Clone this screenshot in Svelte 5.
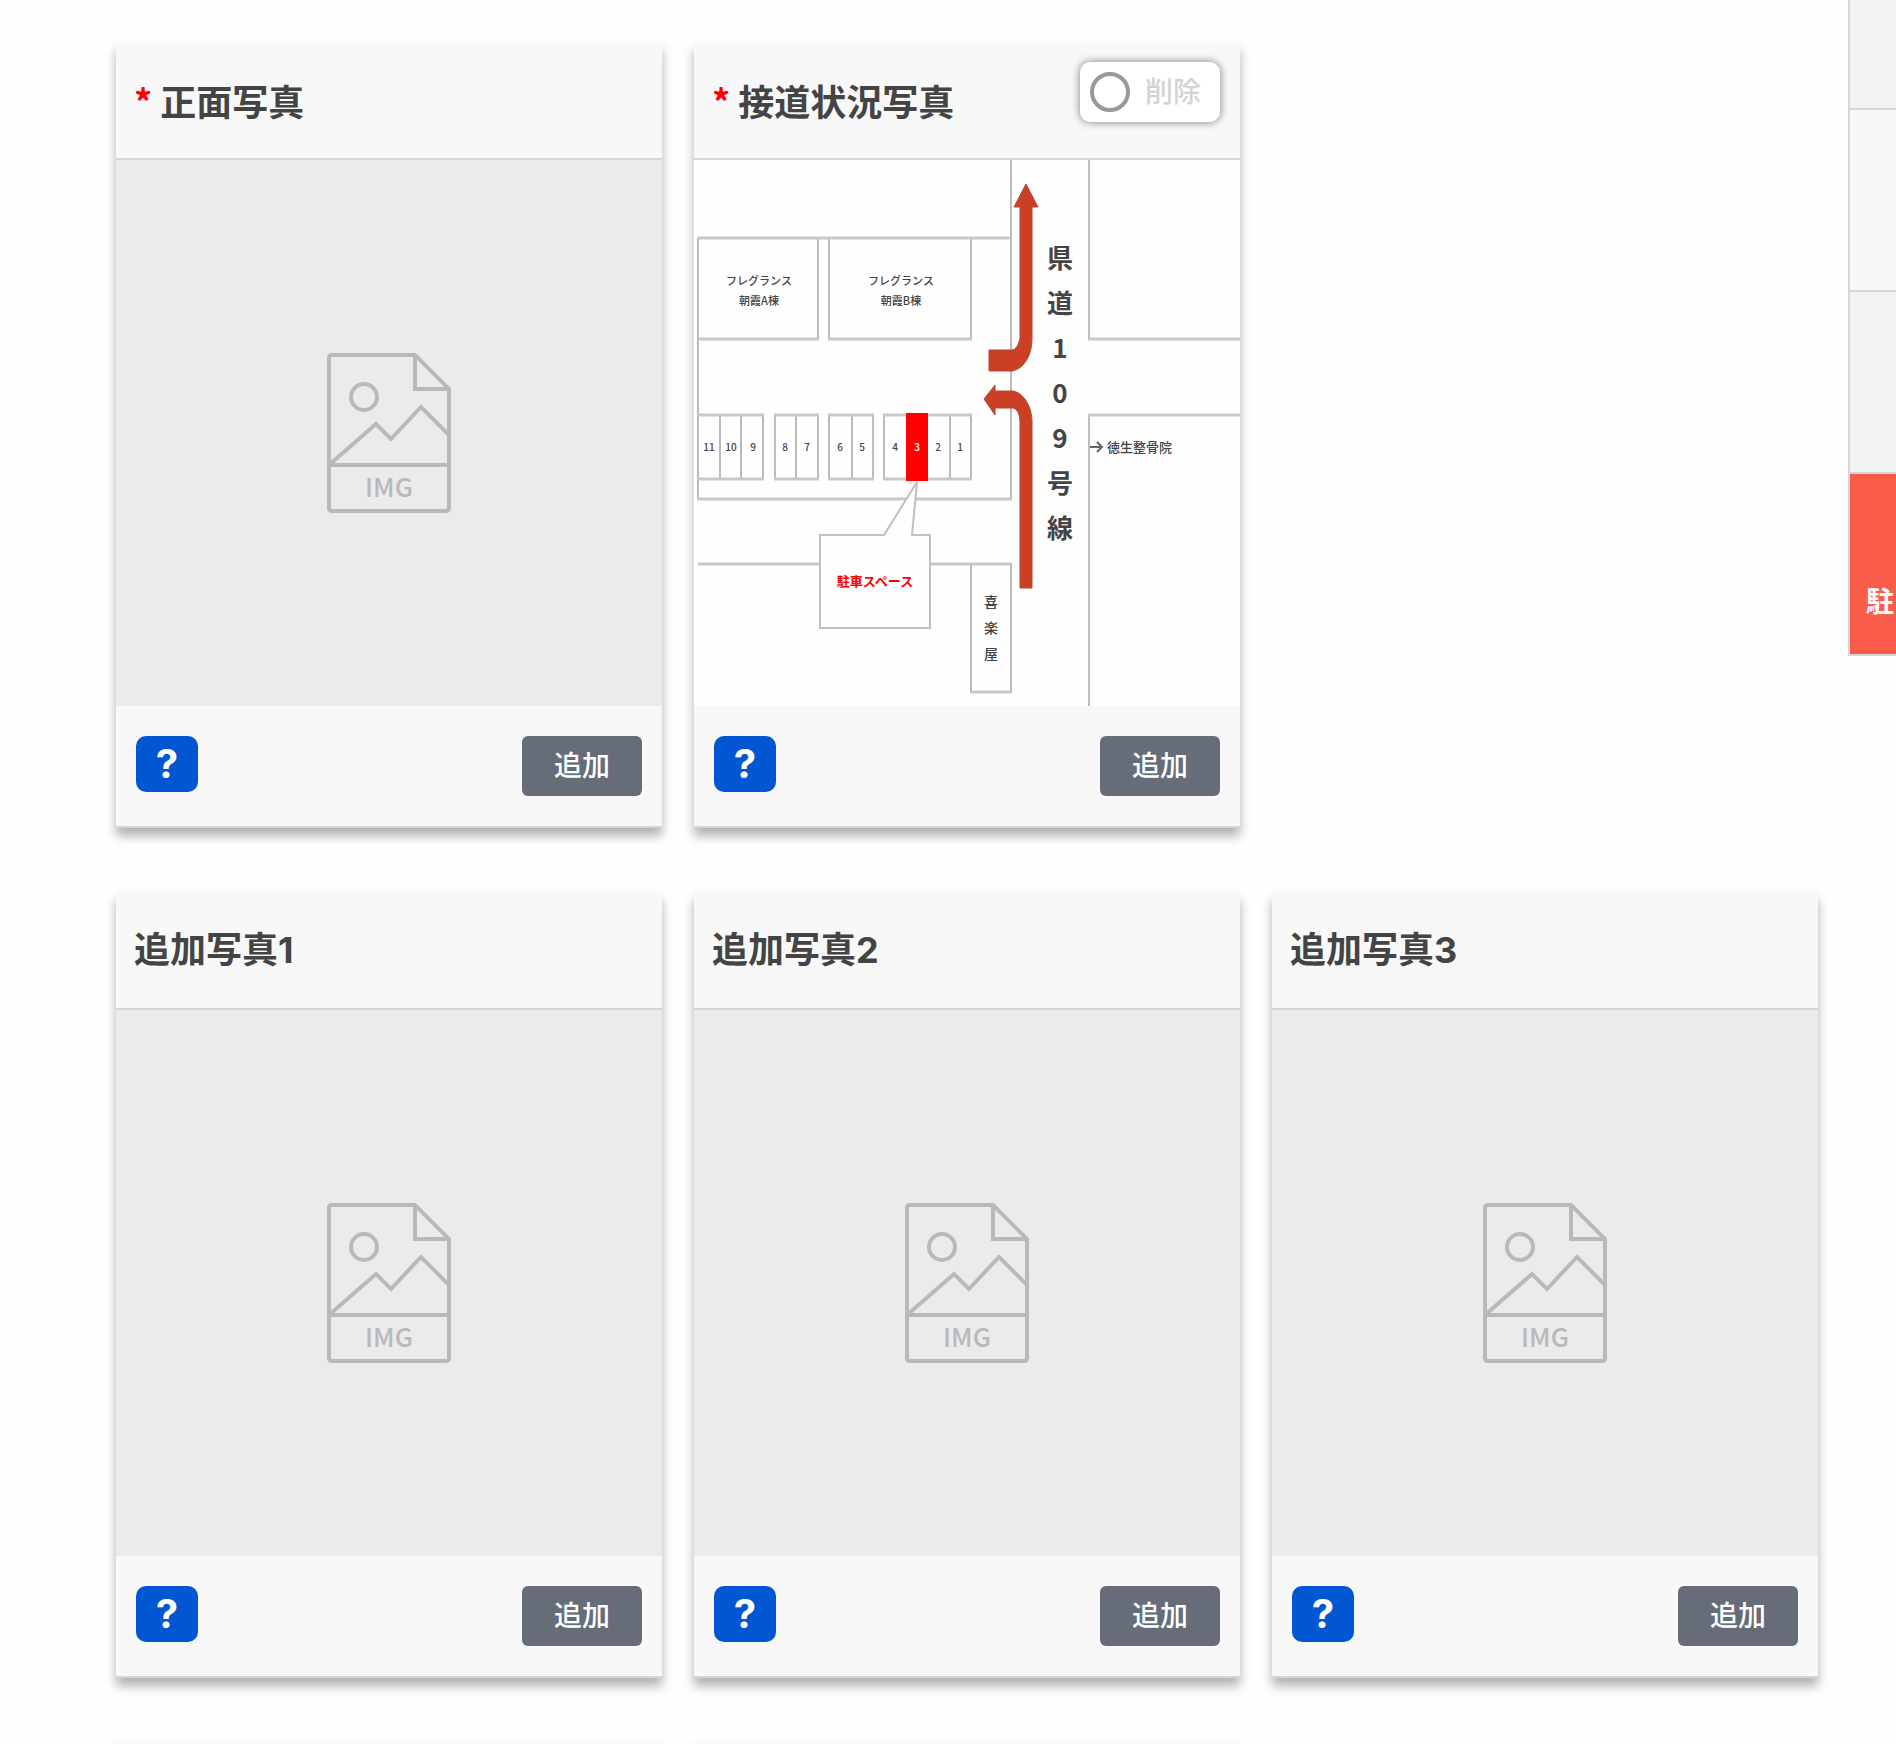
<script>
  let cards = $state([
    { title: "正面写真", required: true, map: false },
    { title: "接道状況写真", required: true, map: true, remove: false },
    { title: "追加写真1", newRow: true },
    { title: "追加写真2" },
    { title: "追加写真3" }
  ]);

  const steps = [
    { label: "", kind: "cut" },
    { label: "", kind: "light" },
    { label: "", kind: "plain" },
    { label: "駐", kind: "active" }
  ];

  // parking lot numbers and the x of their centre
  const lots = [
    [11, 15], [10, 37], [9, 59], [8, 91], [7, 113], [6, 146],
    [5, 168], [4, 201], [3, 223], [2, 244], [1, 266]
  ];
  const road = ["県", "道", "1", "0", "9", "号", "線"];
  const shop = ["喜", "楽", "屋"];
</script>

<div class="page">
  <main class="grid">
    {#each cards as card}
      <section class="card" class:new-row={card.newRow}>
        <header class="card-header">
          <h2>
            {#if card.required}<span class="required">*</span>{/if}{card.title}
          </h2>
          {#if card.map}
            <label class="remove">
              <input type="checkbox" bind:checked={card.remove} />
              <span>削除</span>
            </label>
          {/if}
        </header>

        <div class="photo">
          {#if card.map}
            <svg class="map" viewBox="0 0 546 546" role="img" aria-label={card.title}>
              <rect width="546" height="546" fill="#fefefe" />
              <g class="v">
                <path d="M317 0V339M4 78V339M124 78V179M135 78V179M277 78V179" />
                <path d="M395 0V179M395 255V546" />
                <path d="M26 255V319M47 255V319M69 255V319M81 255V319M102 255V319M124 255V319" />
                <path d="M135 255V319M158 255V319M179 255V319M190 255V319M256 255V319M277 255V319" />
                <path d="M277 404V532M317 404V532" />
              </g>
              <g class="h">
                <path d="M4 78H317M4 179H125M134 179H278M3 339H318" />
                <path d="M3 255H70M80 255H125M134 255H180M189 255H278" />
                <path d="M3 319H70M80 319H125M134 319H180M189 319H278" />
                <path d="M394 179H546M394 255H546M4 404H318M276 532H318" />
              </g>
              <rect x="212" y="253" width="22" height="68" fill="#f00" />
              <path class="callout" d="M126 375H190L223 322L218 375H236V468H126Z" />
              <path
                class="arrow"
                d="M295 190V211H318C330 209 338 195 338 179V47H344L332 24L320 47H326V178C325 184 322 190 318 190Z"
              />
              <path
                class="arrow"
                d="M290 239L301 225V231H319C330 233 338 247 338 262V428H326V262C326 254 323 249 319 248H301V255Z"
              />
              <text class="small" x="65" y="125">フレグランス</text>
              <text class="small" x="65" y="145">朝霞A棟</text>
              <text class="small" x="207" y="125">フレグランス</text>
              <text class="small" x="207" y="145">朝霞B棟</text>
              {#each lots as [no, x]}
                <text class="lot" class:taken={no === 3} {x} y="291">{no}</text>
              {/each}
              {#each road as char, i}
                <text class="road" x="366" y={108 + i * 45}>{char}</text>
              {/each}
              {#each shop as char, i}
                <text class="shop" x="297" y={447 + i * 26}>{char}</text>
              {/each}
              <path class="pointer" d="M396 287H407M403 282L408 287L403 292" />
              <text class="clinic" x="413" y="292">徳生整骨院</text>
              <text class="space" x="181" y="426">駐車スペース</text>
            </svg>
          {:else}
            <svg class="placeholder" viewBox="0 0 124 160" aria-hidden="true">
              <path d="M88 2H5Q2 2 2 5V155Q2 158 5 158H119Q122 158 122 155V36Z" />
              <path d="M88 2V36H122M2 112H122" />
              <path d="M2 112L49 71L64 86L94 54L122 82" />
              <circle cx="37" cy="44" r="13" />
              <text x="62" y="144">IMG</text>
            </svg>
          {/if}
        </div>

        <footer class="card-footer">
          <button class="help" type="button">?</button>
          <button class="add" type="button">追加</button>
        </footer>
      </section>
    {/each}
    <section class="card new-row"></section>
    <section class="card"></section>
  </main>

  <nav class="steps">
    {#each steps as step}
      <div class="step {step.kind}">
        {#if step.label}<a href="#parking">{step.label}</a>{/if}
      </div>
    {/each}
  </nav>
</div>

<style>
  :global(body) {
    background: #fefefe;
    font-family: Inter, "Noto Sans CJK JP", sans-serif;
    color: #444;
  }
  .page {
    display: flex;
    align-items: flex-start;
    height: 100vh;
    overflow: hidden;
  }
  .grid {
    flex: 1;
    display: grid;
    grid-template-columns: repeat(3, 1fr);
    gap: 64px 32px;
    padding: 42px 30px 0 116px;
  }
  .card {
    min-height: 120px;
    background: #f8f8f8;
    border-bottom: 2px solid #d5d5d5;
    box-shadow: 0 8px 10px rgba(0, 0, 0, 0.3);
  }
  .new-row {
    grid-column-start: 1;
  }
  .card-header {
    display: flex;
    justify-content: space-between;
    align-items: flex-start;
    box-sizing: border-box;
    height: 118px;
    padding: 20px 20px 0 18px;
    border-bottom: 2px solid #d5d5d5;
  }
  h2 {
    margin: 0;
    font-size: 36px;
    line-height: 76px;
    font-weight: 700;
  }
  .required {
    margin-right: 8px;
    color: #f00;
    font-family: "Noto Sans CJK JP", sans-serif;
  }
  .remove {
    display: flex;
    align-items: center;
    gap: 15px;
    box-sizing: border-box;
    width: 140px;
    height: 60px;
    padding-left: 10px;
    border-radius: 10px;
    background: #fff;
    box-shadow: 0 0 8px rgba(0, 0, 0, 0.5);
    color: #d3d3d3;
    font-size: 28px;
    line-height: 40px;
    font-weight: 500;
    cursor: pointer;
  }
  .remove input {
    appearance: none;
    box-sizing: border-box;
    width: 40px;
    height: 40px;
    margin: 0;
    border: 4px solid #999;
    border-radius: 50%;
  }
  .remove input:checked {
    background: #999;
  }
  .photo {
    display: flex;
    align-items: center;
    justify-content: center;
    aspect-ratio: 1;
    background: #ebebeb;
  }
  .placeholder {
    width: 124px;
    height: 160px;
    fill: none;
    stroke: #b9b9b9;
    stroke-width: 4;
  }
  .placeholder text {
    fill: #b9b9b9;
    stroke: none;
    font-family: "Noto Sans CJK JP", sans-serif;
    font-size: 26px;
    font-weight: 500;
    text-anchor: middle;
  }
  .map {
    width: 100%;
    height: 100%;
    font-family: "Noto Sans CJK JP", sans-serif;
    font-weight: 500;
    fill: #444;
  }
  .map text {
    text-anchor: middle;
  }
  .map .v {
    fill: none;
    stroke: #bbb;
    stroke-width: 2;
  }
  .map .h {
    fill: none;
    stroke: #c8c8c8;
    stroke-width: 3;
  }
  .map .callout {
    fill: #fefefe;
    stroke: #c0c0c0;
    stroke-width: 2;
  }
  .map .arrow {
    fill: #cb4024;
    stroke: #b04a36;
    stroke-width: 1;
  }
  .map .pointer {
    fill: none;
    stroke: #666;
    stroke-width: 2;
  }
  .map .small {
    font-size: 11px;
  }
  .map .lot {
    font-size: 10px;
  }
  .map .taken {
    fill: #fff;
  }
  .map .road {
    font-size: 26px;
    font-weight: 700;
  }
  .map .shop {
    font-size: 14px;
  }
  .map .clinic {
    font-size: 13px;
    text-anchor: start;
  }
  .map .space {
    fill: #f00;
    font-size: 13px;
    font-weight: 700;
  }
  .card-footer {
    display: flex;
    justify-content: space-between;
    align-items: flex-start;
    padding: 30px 20px;
  }
  button {
    padding: 0;
    border: 0;
    color: #fff;
    font-family: inherit;
    cursor: pointer;
  }
  .help {
    width: 62px;
    height: 56px;
    border-radius: 10px;
    background: #0057d1;
    font-size: 40px;
    line-height: 56px;
    font-weight: 700;
  }
  .add {
    width: 120px;
    height: 60px;
    border-radius: 6px;
    background: #666d78;
    font-size: 28px;
    line-height: 60px;
    font-weight: 500;
  }
  .steps {
    width: 46px;
    overflow: hidden;
    border-left: 2px solid #d5d5d5;
  }
  .step {
    display: flex;
    align-items: flex-end;
    box-sizing: border-box;
    height: 182px;
    padding: 0 0 32px 16px;
    border-bottom: 2px solid #d5d5d5;
    background: #f0f3f2;
  }
  .cut {
    height: 110px;
  }
  .light {
    background: #f8f8f8;
  }
  .active {
    background: #fa5c4b;
  }
  .step a {
    color: #fff;
    font-size: 28px;
    line-height: 40px;
    font-weight: 700;
    text-decoration: none;
  }
</style>
